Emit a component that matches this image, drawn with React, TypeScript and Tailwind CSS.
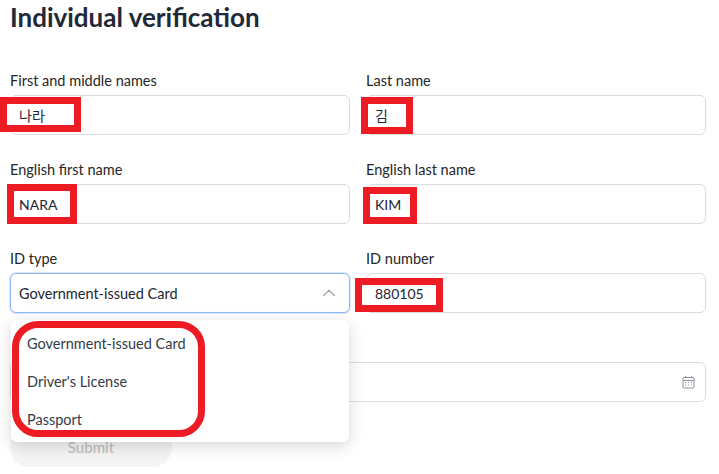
import React from 'react';
import { ChevronUp } from 'lucide-react';

const Field: React.FC<{ label: string; value: string; mark: string }> = ({ label, value, mark }) => (
  <div>
    <div className="h-[22px] text-[14.5px] leading-4 text-[#262626]">{label}</div>
    <div className="relative flex h-10 items-center rounded-md border border-[#dcdcdc] bg-white px-2 text-sm text-[#1c2433]">
      <div className={`absolute border-[7px] border-[#ed1c24] bg-white ${mark}`} />
      <span className="relative z-10 pt-[2px]">{value}</span>
    </div>
  </div>
);

const CalendarIcon = () => (
  <svg width="13" height="14" viewBox="0 0 13 14" fill="none" stroke="#8a94a3" strokeWidth="1">
    <rect x="1" y="2.5" width="11" height="10.5" rx="1" />
    <path d="M1 5.5h11M3.5 1v2M9.5 1v2" />
    <path d="M3 7.5h1M6 7.5h1M9 7.5h1M3 10h1M6 10h1M9 10h1" />
  </svg>
);

export default function App() {
  return (
    <div className="relative h-[474px] overflow-hidden bg-white pl-[10px] pr-[13px] font-['Lato','Noto_Sans_CJK_KR',sans-serif]">
      <h1 className="h-[73px] pt-[2px] text-[26px] leading-[30px] font-bold text-[#1f2937]">Individual verification</h1>

      <div className="grid grid-cols-2 gap-x-4 gap-y-[27px]">
        <Field label="First and middle names" value="나라" mark="-left-[11px] top-px h-[35px] w-[81px]" />
        <Field label="Last name" value="김" mark="-left-[6px] top-px h-[37px] w-[52px]" />
        <Field label="English first name" value="NARA" mark="-left-[4px] -top-px h-10 w-[70px]" />
        <Field label="English last name" value="KIM" mark="-left-[4px] top-[2px] h-[37px] w-[54px]" />

        <div>
          <div className="h-[22px] text-[14.5px] leading-4 text-[#262626]">ID type</div>
          <div className="relative">
            <div className="flex h-10 items-center justify-between rounded-md border border-[#8db8f5] bg-white px-2 text-[14.5px] text-[#1c2433] shadow-[0_0_0_1px_#dbe8fc]">
              <span className="pt-[2px]">Government-issued Card</span>
              <ChevronUp size={22} strokeWidth={1.2} className="mr-px text-[#a3a3a3]" />
            </div>
            <div className="absolute top-[47px] right-px left-px z-20 h-[122px] rounded-md bg-white pt-[15px] pl-4 text-[14.5px] text-[#333b47] shadow-[0_4px_16px_rgba(0,0,0,0.16)]">
              <div className="absolute top-px left-px h-[116px] w-[193px] rounded-[26px] border-[7px] border-[#ed1c24]" />
              <div className="flex flex-col gap-5 leading-[18px]">
                <span>Government-issued Card</span>
                <span>Driver's License</span>
                <span>Passport</span>
              </div>
            </div>
          </div>
        </div>
        <Field label="ID number" value="880105" mark="-left-[12px] top-1 h-[34px] w-[88px]" />

        <div className="col-span-2 pt-[22px]">
          <div className="flex h-10 items-center justify-end rounded-md border border-[#dcdcdc] bg-white pr-[10px]">
            <CalendarIcon />
          </div>
        </div>
      </div>

      <button className="mt-[25px] flex h-10 w-[162px] items-center justify-center rounded-[20px] bg-[#f4f4f4] text-[15px] font-medium text-[#bfbfbf]">
        Submit
      </button>
    </div>
  );
}
